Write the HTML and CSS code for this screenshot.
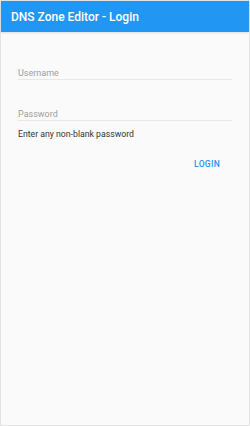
FILE: index.html
```html
<!DOCTYPE html>
<html lang="en">
<head>
    <meta charset="UTF-8">
    <meta name="viewport" content="width=device-width, initial-scale=1.0">
    <title>DNS Zone Editor - Login</title>
    <link rel="stylesheet" href="styles.css">
</head>
<body>
    <div class="screen">
        <!-- App bar -->
        <header class="app-bar">DNS Zone Editor - Login</header>

        <form class="login-form">
            <!-- Username -->
            <div class="field">
                <input type="text" class="field-input" placeholder="Username">
            </div>

            <!-- Password -->
            <div class="field field-last">
                <input type="password" class="field-input" placeholder="Password">
            </div>
            <p class="hint">Enter any non-blank password</p>

            <div class="actions">
                <button type="button" class="btn-text">Login</button>
            </div>
        </form>
    </div>
</body>
</html>
```

FILE: styles.css
```css
/* General Styles */
* {
    box-sizing: border-box;
}

body {
    margin: 0;
    padding: 0;
    font-family: Roboto, "Noto Sans", Arial, sans-serif;
    background-color: #fff;
}

.screen {
    width: 250px;
    height: 426px;
    border: 1px solid #e4e4e4;
    background-color: #fafafa;
    display: flex;
    flex-direction: column;
}

.app-bar {
    height: 31px;
    background-color: #2196f3;
    color: #fff;
    font-size: 12px;
    font-weight: 500;
    padding: 0 10px;
    display: flex;
    align-items: center;
    box-shadow: 0 1px 2px rgba(0, 0, 0, 0.12);
}

.login-form {
    padding: 35px 17px 0 17px;
}

.field {
    margin-bottom: 28px;
}

.field-last {
    margin-bottom: 0;
}

.field-input {
    display: block;
    width: 100%;
    height: 13px;
    border: none;
    border-bottom: 1px solid #e8e8e8;
    background: transparent;
    padding: 0;
    font-family: inherit;
    font-size: 9px;
    line-height: 12px;
    color: #333;
    outline: none;
}

.field-input::placeholder {
    color: #9e9e9e;
}

.hint {
    margin: 8px 0 0 0;
    font-size: 8.7px;
    line-height: 10px;
    color: #333;
}

.actions {
    display: flex;
    justify-content: flex-end;
    margin-top: 20px;
}

.btn-text {
    background: none;
    border: none;
    padding: 0 12px;
    font-family: inherit;
    font-size: 8.5px;
    line-height: 10px;
    font-weight: 500;
    text-transform: uppercase;
    color: #2196f3;
    letter-spacing: 0.3px;
    cursor: pointer;
}
```
